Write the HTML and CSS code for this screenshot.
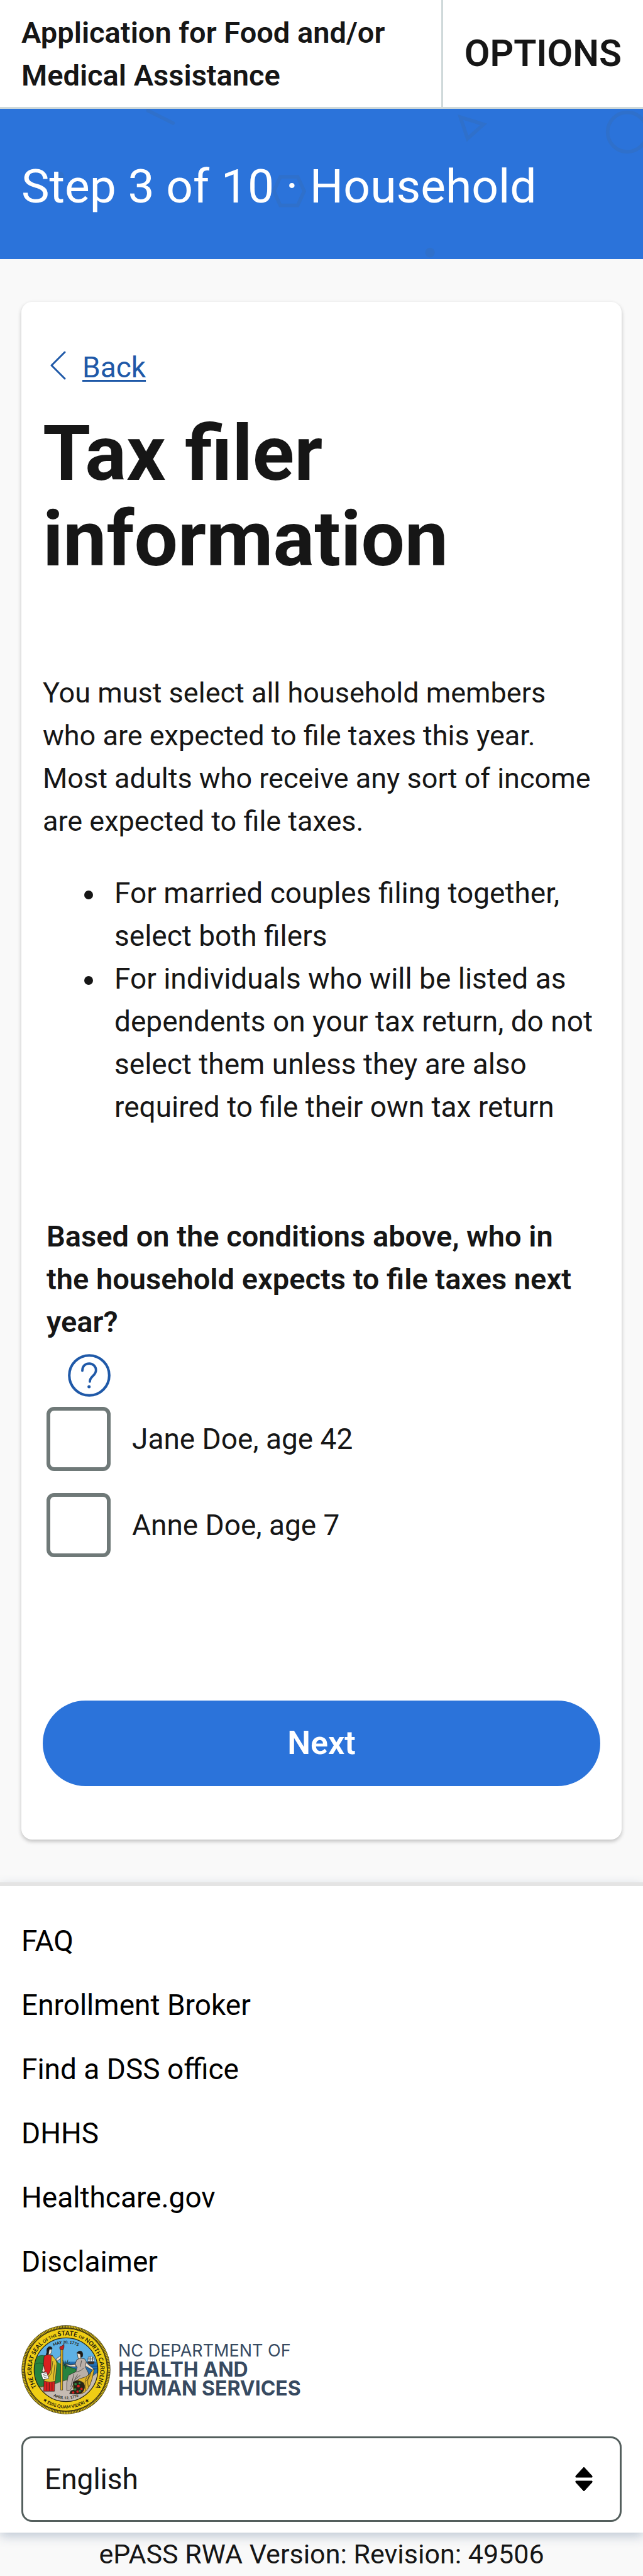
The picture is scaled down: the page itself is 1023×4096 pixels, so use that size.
FILE: index.html
```html
<!DOCTYPE html>
<html lang="en">
<head>
<meta charset="utf-8">
<meta name="viewport" content="width=device-width, initial-scale=1">
<title>Tax filer information</title>
<link rel="stylesheet" href="styles.css">
</head>
<body>
<header class="topbar">
  <p class="topbar-title">Application for Food and/or Medical Assistance</p>
  <button class="topbar-options" type="button">OPTIONS</button>
</header>

<div class="banner">
  <svg class="banner-shapes" viewBox="0 0 1080 252" preserveAspectRatio="xMidYMid slice" aria-hidden="true">
    <g fill="none" stroke="#2f70cb" stroke-width="6">
      <path d="M249 3 291 24" stroke-linecap="round"/>
      <path d="M460 138 471 114H500L511 138 500 162H471Z"/>
      <path d="M773 14 812 26 785 50Z"/>
      <circle cx="1053" cy="39" r="33"/>
    </g>
    <g fill="#2f70cb">
      <circle cx="100" cy="113" r="8"/>
      <circle cx="722" cy="241" r="8"/>
    </g>
  </svg>
  <p class="banner-step">Step 3 of 10 · Household</p>
</div>

<main class="main">
  <form class="card">
    <div class="back">
      <svg class="back-icon" viewBox="0 0 26 46" aria-hidden="true"><path d="M24 2 3 23 24 44" fill="none" stroke="currentColor" stroke-width="3" stroke-linecap="round" stroke-linejoin="round"/></svg>
      <a class="back-link" href="#back">Back</a>
    </div>
    <h1 class="heading">Tax filer information</h1>
    <p class="intro">You must select all household members who are expected to file taxes this year. Most adults who receive any sort of income are expected to file taxes.</p>
    <ul class="conditions">
      <li>For married couples filing together, select both filers</li>
      <li>For individuals who will be listed as dependents on your tax return, do not select them unless they are also required to file their own tax return</li>
    </ul>
    <fieldset class="question">
      <legend class="question-text">Based on the conditions above, who in the household expects to file taxes next year?</legend>
      <button class="help" type="button" aria-label="Help">
        <svg class="help-icon" viewBox="0 0 216 216" aria-hidden="true">
          <circle cx="108" cy="108" r="101" fill="none" stroke="currentColor" stroke-width="13"/>
          <path d="M73 84C73 60 89 48 108 48C129 48 142 64 142 82C142 110 111 112 111 139" fill="none" stroke="currentColor" stroke-width="12" stroke-linecap="round"/>
          <circle cx="107" cy="165" r="8" fill="currentColor"/>
        </svg>
      </button>
      <div class="choices">
        <label class="choice"><input class="choice-box" type="checkbox" name="filer" value="jane">Jane Doe, age 42</label>
        <label class="choice"><input class="choice-box" type="checkbox" name="filer" value="anne">Anne Doe, age 7</label>
      </div>
    </fieldset>
    <button class="next" type="button">Next</button>
  </form>
</main>

<footer class="footer">
  <nav class="footer-links">
    <a href="#faq">FAQ</a>
    <a href="#broker">Enrollment Broker</a>
    <a href="#dss">Find a DSS office</a>
    <a href="#dhhs">DHHS</a>
    <a href="#healthcare">Healthcare.gov</a>
    <a href="#disclaimer">Disclaimer</a>
  </nav>
  <div class="logo">
    <svg class="seal" viewBox="48 70 448 448" role="img" aria-label="Great Seal of the State of North Carolina">
      <defs>
        <clipPath id="scene"><circle cx="272" cy="294" r="160"/></clipPath>
        <path id="arc-name" d="M272 466A172 172 0 1 1 272.1 466"/>
        <path id="arc-may" d="M140 294A132 132 0 0 1 404 294"/>
        <path id="arc-april" d="M124 294A148 148 0 0 0 420 294"/>
        <path id="arc-motto" d="M78 294A194 194 0 0 0 466 294"/>
      </defs>
      <circle cx="272" cy="294" r="223" fill="#453c14"/>
      <circle cx="272" cy="294" r="216" fill="none" stroke="#d8bc1c" stroke-width="10" stroke-dasharray="5 3"/>
      <circle cx="272" cy="294" r="207" fill="#efcd14" stroke="#453c14" stroke-width="3"/>
      <g clip-path="url(#scene)">
        <path fill="#5eb1e4" d="M110 130H436V260H110Z"/>
        <path fill="#2472b6" d="M250 254H436V330H250Z"/>
        <path d="M262 266H330M372 276H430M385 290H432M262 278H300" stroke="#123f70" stroke-width="3"/>
        <path fill="#27833f" stroke="#143c1d" stroke-width="2" d="M110 250Q130 218 158 222Q215 232 236 262Q250 272 322 290Q310 320 262 350L200 372 130 380 108 320Z"/>
        <path d="M118 266Q140 254 160 266" fill="none" stroke="#143c1d" stroke-width="2"/>
        <path fill="#c5bbb2" stroke="#514b45" stroke-width="2" d="M130 386 214 366Q260 348 286 344L400 330 440 300V460H110Z"/>
        <path fill="#27833f" d="M268 346Q282 316 322 294L326 310 284 346Z"/>
      </g>
      <circle cx="272" cy="294" r="160" fill="none" stroke="#2b2712" stroke-width="4"/>
      <g stroke="#1d1a17" stroke-width="2" stroke-linejoin="round">
        <path fill="#d9201f" d="M162 226 178 218 204 222 214 242 206 300 216 350 214 402H160L162 340 156 300Z"/>
        <path fill="#e3c02a" d="M198 220Q224 240 226 264L218 352Q190 360 166 352L160 346Q190 318 196 290Z"/>
        <path d="M206 250 198 312 176 342M216 268 208 346M176 356V398M188 358V400M202 356V398" fill="none"/>
        <path fill="#f1e3cf" d="M222 240 244 224 250 210 254 220 250 234 226 252Z"/>
        <path fill="#f1e3cf" d="M160 270 152 300 158 308 166 300Z"/>
        <path fill="#fff" d="M146 310 174 306 186 338 156 344Z"/>
        <path d="M156 318 172 314M158 326 176 322M162 334 178 330" fill="none"/>
        <path fill="#f1e3cf" d="M180 190Q200 184 200 198Q200 212 192 218H180Z"/>
        <path fill="#1d1a17" d="M176 206Q172 184 188 178Q204 178 202 190L188 192 184 216 172 220Z"/>
        <path fill="#e6b71d" d="M246 192H256L255 396H245Z"/>
        <path fill="#c4201d" d="M242 192Q236 176 250 176L262 166Q264 182 258 194Z"/>
        <path fill="#b9afa8" d="M326 244 342 236 366 240 376 258 370 282 384 310Q390 330 350 340L318 352 300 388Q290 402 276 398Q272 360 284 322L322 304 328 282 318 266Z"/>
        <path d="M322 306Q350 300 362 284M312 316 296 380M330 318 306 362M344 322 316 344M350 248 344 280" fill="none"/>
        <path fill="#f1e3cf" d="M320 266 322 280 292 278 270 270 272 264 294 270Z"/>
        <path fill="#f1e3cf" d="M372 258 406 286 414 296 402 294 370 276Z"/>
        <path fill="#f1e3cf" d="M328 212Q344 204 350 216L346 236 334 240Z"/>
        <path fill="#1d1a17" d="M326 210Q336 196 350 202Q360 212 354 230L346 232 344 216Z"/>
        <path fill="#e0b32a" d="M404 296 414 290Q406 340 392 372Q370 420 330 416Q296 392 312 356Q340 336 370 330Q394 318 404 296Z"/>
        <path d="M398 304Q392 336 372 352M390 318Q376 344 384 380M378 330Q360 350 372 400" fill="none"/>
        <path fill="#2a2416" d="M308 356Q336 340 360 360Q374 384 352 410Q330 420 290 414L296 400 314 394Z"/>
      </g>
      <g>
        <path d="M270 290 268 248M270 286 256 246M270 286 282 244M268 276 258 262M272 272 290 256" stroke="#23401f" stroke-width="3"/>
        <g fill="#d9201f"><circle cx="334" cy="376" r="7"/><circle cx="350" cy="390" r="6"/><circle cx="308" cy="408" r="6"/><circle cx="330" cy="404" r="6"/></g>
        <g fill="#2f8a41"><circle cx="320" cy="366" r="6"/><circle cx="340" cy="362" r="5"/><circle cx="318" cy="392" r="6"/><circle cx="342" cy="400" r="5"/></g>
        <path fill="#3b2d22" d="M378 254H416L410 266H386Z"/>
        <path fill="#f2f2f2" stroke="#30363b" stroke-width="2" d="M384 230H392V252H382ZM395 226H403V252H394ZM406 232H413V252H405Z"/>
        <path d="M380 240H416" stroke="#30363b" stroke-width="2"/>
      </g>
      <g class="seal-text" fill="#1d1a0c" text-anchor="middle">
        <text font-size="30"><textPath href="#arc-name" startOffset="50%">THE GREAT SEAL <tspan font-size="21">OF THE </tspan><tspan font-size="33">STATE </tspan><tspan font-size="21">OF </tspan>NORTH CAROLINA</textPath></text>
        <text font-size="20"><textPath href="#arc-may" startOffset="50%">MAY 20, 1775</textPath></text>
        <text font-size="19"><textPath href="#arc-april" startOffset="50%">APRIL 12, 1776</textPath></text>
        <text font-size="22"><textPath href="#arc-motto" startOffset="50%">★ ESSE QUAM VIDERI ★</textPath></text>
      </g>
    </svg>
    <p class="logo-name"><span class="logo-dept">NC DEPARTMENT OF</span><strong>HEALTH AND</strong><strong>HUMAN SERVICES</strong></p>
  </div>
  <div class="language">
    <select class="language-select" aria-label="Language">
      <option>English</option>
      <option>Español</option>
    </select>
    <svg class="language-arrows" viewBox="0 0 28 40" aria-hidden="true"><path d="M14 1 27 15V17H1V15ZM14 39 27 25V23H1V25Z" stroke="#000" stroke-linejoin="round"/></svg>
  </div>
</footer>
<p class="version">ePASS RWA Version: Revision: 49506</p>
</body>
</html>
```
FILE: styles.css
```css
*, *::before, *::after {
  box-sizing: border-box;
}

body {
  margin: 0;
  background: #f9f9f9;
  color: #161616;
  font-family: Roboto, "Liberation Sans", sans-serif;
  font-size: 46px;
  line-height: 68px;
}

p, h1, ul, fieldset, legend {
  margin: 0;
  padding: 0;
}

button, input, select {
  margin: 0;
  font: inherit;
  color: inherit;
}

/* Top bar */
.topbar {
  display: flex;
  align-items: stretch;
  justify-content: space-between;
  background: #fff;
  border-bottom: 3px solid #cfd9da;
}

.topbar-title {
  flex: 1;
  padding: 18px 34px 16px;
  font-size: 47px;
  font-weight: 600;
}

.topbar-options {
  padding: 0 34px;
  border: 0;
  border-left: 3px solid #cfd9da;
  background: none;
  font-size: 59px;
  font-weight: 600;
}

/* Step banner */
.banner {
  position: relative;
  overflow: hidden;
  padding: 72px 34px 65px;
  background: #2b73da;
  color: #fff;
}

.banner-shapes {
  position: absolute;
  inset: 0;
  width: 100%;
  height: 100%;
}

.banner-step {
  position: relative;
  font-size: 75px;
  line-height: 102px;
}

/* Card */
.main {
  padding: 68px 34px;
}

.card {
  display: flex;
  flex-direction: column;
  padding: 70px 34px 85px;
  border-radius: 17px;
  background: #fff;
  box-shadow: 0 3px 6px rgba(0, 0, 0, 0.24);
}

.back {
  display: flex;
  align-items: center;
  gap: 26px;
  padding-left: 11px;
  color: #1f59a8;
}

.back-icon {
  width: 26px;
  height: 46px;
  margin-bottom: 6px;
}

.back-link {
  color: inherit;
  text-decoration-thickness: 3px;
  text-underline-offset: 4px;
}

.heading {
  margin-top: 35px;
  font-size: 123px;
  font-weight: 700;
  line-height: 136px;
}

.intro {
  margin-top: 143px;
  font-size: 45px;
}

.conditions {
  margin-top: 46px;
  padding-left: 66px;
  list-style: none;
}

.conditions li {
  display: grid;
  grid-template-columns: 14px 1fr;
  column-gap: 34px;
}

.conditions li::before {
  content: "";
  height: 14px;
  margin-top: 30px;
  border-radius: 50%;
  background: #161616;
}

.question {
  min-width: 0;
  margin-top: 138px;
  padding: 0 6px;
  border: 0;
}

.question-text {
  font-size: 47px;
  font-weight: 600;
}

.help {
  display: block;
  padding: 17px 34px 16px;
  border: 0;
  background: none;
  color: #1f59a8;
}

.help-icon {
  display: block;
  width: 68px;
  height: 68px;
}

.choices {
  display: flex;
  flex-direction: column;
  gap: 35px;
}

.choice {
  display: flex;
  align-items: center;
  gap: 34px;
}

.choice-box {
  appearance: none;
  width: 102px;
  height: 102px;
  border: 6px solid #6f7978;
  border-radius: 12px;
  background: #fff;
}

.choice-box:checked {
  background: #2b73da;
}

.next {
  margin-top: 228px;
  padding: 34px;
  border: 0;
  border-radius: 68px;
  background: #2b73da;
  color: #fff;
  font-size: 52px;
  font-weight: 600;
}

/* Footer */
.footer {
  position: relative;
  padding: 36px 34px 17px;
  border-top: 6px solid #e4e4e4;
  background: #fff;
  box-shadow: 0 6px 16px rgba(60, 90, 130, 0.3);
}

.footer-links {
  display: flex;
  flex-direction: column;
  align-items: flex-start;
}

.footer-links a {
  color: #000;
  line-height: 102px;
  text-decoration: none;
}

.logo {
  display: flex;
  align-items: center;
  gap: 12px;
  margin-top: 50px;
}

.seal {
  width: 142px;
  height: 142px;
}

.seal-text {
  font-family: Lato, sans-serif;
  font-weight: 700;
}

.logo-name {
  display: flex;
  flex-direction: column;
  color: #374a61;
  font-family: Inter, "Liberation Sans", sans-serif;
  font-size: 32px;
  line-height: 30px;
}

.logo-dept {
  font-size: 27px;
}

.language {
  position: relative;
  margin-top: 35px;
}

.language-select {
  appearance: none;
  display: block;
  width: 100%;
  padding: 31px 34px;
  border: 3px solid #545f5d;
  border-radius: 17px;
  background: #fff;
}

.language-arrows {
  position: absolute;
  top: 48px;
  right: 46px;
  width: 28px;
  height: 40px;
  pointer-events: none;
}

.version {
  font-size: 43px;
  text-align: center;
}
```
